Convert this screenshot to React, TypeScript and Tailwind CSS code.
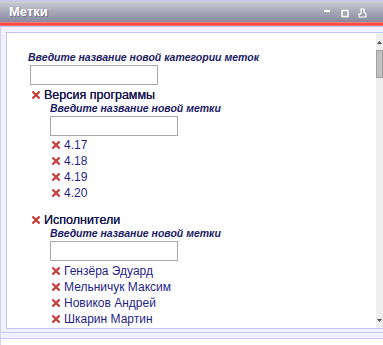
import React from "react";

const X = () => (
  <svg width="8" height="8" viewBox="0 0 8 8" className="shrink-0">
    <path d="M1.2 1.2 L6.8 6.8 M6.8 1.2 L1.2 6.8" stroke="#c83a3a" strokeWidth="2.2" strokeLinecap="square" />
  </svg>
);

const Label = ({ children }: { children: React.ReactNode }) => (
  <div className="text-[10.5px] leading-[13px] font-bold italic text-[#1b1b66]">
    {children}
  </div>
);

const Input = () => <div className="w-[128px] h-[20px] border border-[#a8a8a8] bg-white" />;

const Item = ({ t }: { t: string }) => (
  <div className="flex items-center gap-[4px] h-[16px]">
    <X />
    <span className="text-[12px] text-[#1f1f8a]">{t}</span>
  </div>
);

const Heading = ({ t }: { t: string }) => (
  <div className="flex items-center gap-[4px] h-[14px]">
    <X />
    <span className="text-[12.5px] text-[#15154f] [text-shadow:0_0_0.3px_#15154f]">{t}</span>
  </div>
);

export default function App() {
  return (
    <div className="w-[383px] h-[345px] bg-white overflow-hidden flex flex-col" style={{ fontFamily: "'Liberation Sans', Arial, sans-serif" }}>
      <div className="h-[1px] bg-[#c8c8f0]" />
      <div className="h-[21px] bg-gradient-to-b from-[#cfcfd8] via-[#a8a8b8] to-[#8a8aa0] flex items-center px-[9px]">
        <span className="text-white font-bold text-[13px] [text-shadow:1px_1px_1px_#707090]">Метки</span>
        <div className="ml-auto flex items-center gap-[7px] pr-[5px] pt-[3px]">
          <svg width="10" height="10" viewBox="0 0 10 10"><rect x="1" y="2" width="6" height="2" fill="white" /></svg>
          <svg width="10" height="10" viewBox="0 0 10 10"><rect x="2" y="2.5" width="6" height="6" fill="none" stroke="white" strokeWidth="1.5" /></svg>
          <svg width="12" height="10" viewBox="0 0 12 10"><path d="M4 1 H7 V4 L9 6 V9 H2 V6 H4 Z" fill="none" stroke="white" strokeWidth="1.2" /></svg>
        </div>
      </div>
      <div className="h-[4px] bg-gradient-to-b from-[#ff9090] via-[#ff2a2a] to-[#ff8080]" />
      <div className="h-[1px] bg-[#c8c8ff]" />
      <div className="flex-1 bg-[#f2f2ff] border-l border-[#d0d0f8] flex flex-col pt-[5px] pl-[5px]">
        <div className="h-[297px] bg-white border-l border-t border-b border-[#c4c4f4] flex">
          <div className="flex-1 pl-[21px] pt-[18px]">
            <Label>Введите название новой категории меток</Label>
            <div className="mt-[1px] ml-[2px]"><Input /></div>
            <div className="ml-[4px] mt-[3px]">
              <Heading t="Версия программы" />
              <div className="ml-[18px]">
                <Label>Введите название новой метки</Label>
                <div className="mt-[1px]"><Input /></div>
                <div className="mt-[1px] ml-[2px] flex flex-col">
                  <Item t="4.17" />
                  <Item t="4.18" />
                  <Item t="4.19" />
                  <Item t="4.20" />
                </div>
              </div>
              <div className="mt-[12px]">
                <Heading t="Исполнители" />
              </div>
              <div className="ml-[18px]">
                <Label>Введите название новой метки</Label>
                <div className="mt-[1px]"><Input /></div>
                <div className="mt-[2px] ml-[2px] flex flex-col">
                  <Item t="Гензёра Эдуард" />
                  <Item t="Мельничук Максим" />
                  <Item t="Новиков Андрей" />
                  <Item t="Шкарин Мартин" />
                </div>
              </div>
            </div>
          </div>
          <div className="w-[7px] bg-[#eeeeee] flex flex-col items-center pt-[8px]">
            <svg width="5" height="3" viewBox="0 0 5 3"><path d="M0 3 L2.5 0 L5 3 Z" fill="#505050" /></svg>
            <div className="w-[7px] h-[28px] bg-[#c0c0c0] border border-[#a0a0a0] mt-[6px]" />
            <div className="flex-1" />
            <svg width="5" height="3" viewBox="0 0 5 3" className="mb-[6px]"><path d="M0 0 L2.5 3 L5 0 Z" fill="#505050" /></svg>
          </div>
        </div>
        <div className="h-[3px]" />
        <div className="h-[1px] bg-[#c8c8f8] -ml-[5px]" />
        <div className="h-[5px] bg-[#f2f2ff] -ml-[5px]" />
        <div className="h-[1px] bg-[#c8c8f8] -ml-[5px]" />
        <div className="flex-1 bg-white -ml-[5px]" />
      </div>
    </div>
  );
}
